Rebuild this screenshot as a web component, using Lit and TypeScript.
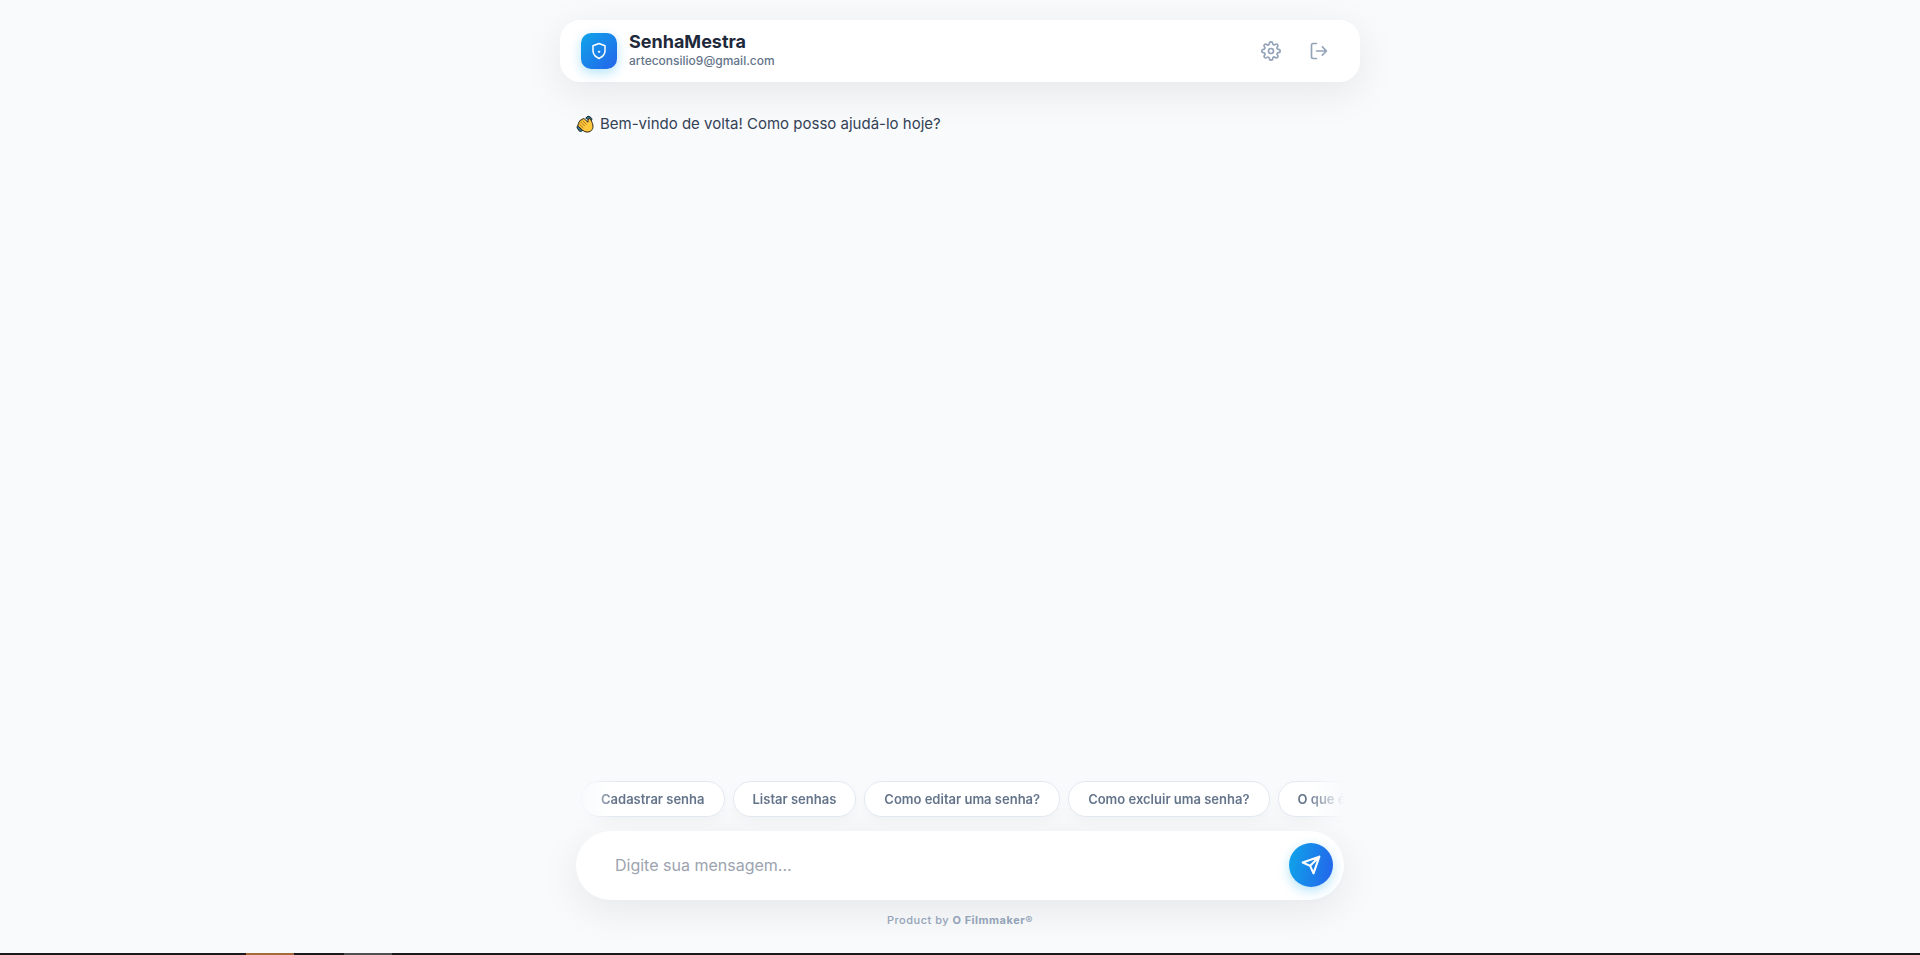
import { LitElement, html, css, svg } from "lit";
import { customElement, state } from "lit/decorators.js";

const gearIcon = svg`
  <circle cx="12" cy="12" r="3"></circle>
  <path d="M19.4 15a1.65 1.65 0 0 0 .33 1.82l.06.06a2 2 0 0 1 0 2.83 2 2 0 0 1-2.83 0l-.06-.06a1.65 1.65 0 0 0-1.82-.33 1.65 1.65 0 0 0-1 1.51V21a2 2 0 0 1-2 2 2 2 0 0 1-2-2v-.09A1.65 1.65 0 0 0 9 19.4a1.65 1.65 0 0 0-1.82.33l-.06.06a2 2 0 0 1-2.83 0 2 2 0 0 1 0-2.83l.06-.06a1.65 1.65 0 0 0 .33-1.82 1.65 1.65 0 0 0-1.51-1H3a2 2 0 0 1-2-2 2 2 0 0 1 2-2h.09A1.65 1.65 0 0 0 4.6 9a1.65 1.65 0 0 0-.33-1.82l-.06-.06a2 2 0 0 1 0-2.83 2 2 0 0 1 2.83 0l.06.06a1.65 1.65 0 0 0 1.82.33H9a1.65 1.65 0 0 0 1-1.51V3a2 2 0 0 1 2-2 2 2 0 0 1 2 2v.09a1.65 1.65 0 0 0 1 1.51 1.65 1.65 0 0 0 1.82-.33l.06-.06a2 2 0 0 1 2.83 0 2 2 0 0 1 0 2.83l-.06.06a1.65 1.65 0 0 0-.33 1.82V9a1.65 1.65 0 0 0 1.51 1H21a2 2 0 0 1 2 2 2 2 0 0 1-2 2h-.09a1.65 1.65 0 0 0-1.51 1z"></path>`;

@customElement("app-root")
export class AppRoot extends LitElement {
  @state() private suggestions = [
    "Cadastrar senha",
    "Listar senhas",
    "Como editar uma senha?",
    "Como excluir uma senha?",
    "O que é o SenhaMestra?",
  ];

  static styles = css`
    :host {
      display: flex;
      flex-direction: column;
      height: 100vh;
      background: #f8fafc;
      color: #1e293b;
      font-family: Inter, "Liberation Sans", sans-serif;
    }
    * { box-sizing: border-box; }
    button { font: inherit; cursor: pointer; }
    svg {
      display: block;
      fill: none;
      stroke: currentColor;
      stroke-width: 2;
      stroke-linecap: round;
      stroke-linejoin: round;
    }
    .page {
      flex: 1;
      min-height: 0;
      width: 100%;
      max-width: 800px;
      margin: 0 auto;
      display: flex;
      flex-direction: column;
    }
    .header {
      display: flex;
      align-items: center;
      gap: 12px;
      margin-top: 20px;
      padding: 12px 20px;
      border: 1px solid #fff;
      border-radius: 20px;
      background: #fff;
      box-shadow: 0 10px 40px rgba(0, 0, 0, 0.08);
    }
    .logo {
      display: grid;
      place-items: center;
      width: 36px;
      height: 36px;
      border-radius: 10px;
      color: #fff;
      background: linear-gradient(135deg, #0ea5e9, #2563eb);
      box-shadow: 0 4px 12px rgba(14, 165, 233, 0.3);
    }
    .identity { flex: 1; }
    .title {
      margin: 0;
      font-size: 18px;
      line-height: 18px;
      font-weight: 700;
    }
    .email {
      margin: 0;
      padding-top: 2px;
      font-size: 12px;
      line-height: 16px;
      font-weight: 500;
      color: #64748b;
    }
    .actions { display: flex; gap: 8px; }
    .icon-button {
      display: grid;
      place-items: center;
      width: 40px;
      height: 36px;
      padding: 0;
      border: 0;
      border-radius: 10px;
      background: transparent;
      color: #94a3b8;
    }
    .messages {
      flex: 1;
      min-height: 0;
      padding: 28px 16px;
    }
    .message {
      display: flex;
      align-items: center;
      gap: 6px;
      margin: 0;
      font-size: 15px;
      line-height: 28px;
      color: #334155;
    }
    .composer { padding: 0 16px 25px; }
    .suggestions {
      display: flex;
      gap: 8px;
      overflow: hidden;
      padding: 4px 5px 14px;
      mask-image: linear-gradient(to right, transparent, #000 5%, #000 95%, transparent);
    }
    .chip {
      flex: none;
      height: 36px;
      padding: 0 19px;
      border: 1px solid #e2e8f0;
      border-radius: 18px;
      background: #fff;
      box-shadow: 0 4px 12px rgba(0, 0, 0, 0.03);
      color: #64748b;
      font-size: 13px;
      font-weight: 600;
      white-space: nowrap;
    }
    .input-bar {
      display: flex;
      align-items: center;
      padding: 11px 11px 13px 39px;
      border-radius: 35px;
      background: #fff;
      box-shadow: 0 10px 40px rgba(0, 0, 0, 0.08);
    }
    .field {
      flex: 1;
      min-width: 0;
      height: 45px;
      padding: 0;
      border: 0;
      outline: 0;
      background: transparent;
      color: #1e293b;
      font: inherit;
      font-size: 16px;
    }
    .field::placeholder { color: #9ca3af; }
    .send {
      display: grid;
      place-items: center;
      width: 44px;
      height: 44px;
      padding: 0;
      border: 0;
      border-radius: 50%;
      color: #fff;
      background: linear-gradient(100deg, #0ea5e9, #2563eb);
      box-shadow: 0 4px 12px rgba(14, 165, 233, 0.3);
    }
    .send svg { stroke-width: 2.5; }
    .credit {
      margin: 12px 0 0;
      font-size: 11px;
      line-height: 16px;
      font-weight: 500;
      letter-spacing: 0.5px;
      text-align: center;
      color: #94a3b8;
    }
    .credit strong { font-weight: 700; }
    .taskbar {
      display: flex;
      gap: 50px;
      height: 2px;
      padding-left: 246px;
      background: #1c181c;
    }
    .task { width: 48px; background: #505050; }
    .task.active { background: #a5693c; }
  `;

  private wave() {
    return html`<svg width="18" height="18" viewBox="0 0 18 18" role="img" aria-label="👋">
      <path fill="#35738c" stroke="#102430" stroke-width="1" d="M10 3c1-2 3-2.300 4-1 1.500.5 2.500 2 1.500 3.500zM1.500 11c-.8 1.200-.5 2.500.5 3 .3 1.800 2 2.800 3.500 2.300l1-1z"></path>
      <path stroke="#2b2012" stroke-width="1" fill="#ffc83d" d="M2.200 11.200c-.9-1.100-.3-2.200.8-2.200-.9-1.300-.2-2.500 1-2.500-.3-1.400.9-2.100 1.900-1.500.3-1.500 1.700-1.800 2.600-.9L12 7.200V5.100c.1-1.900 2.200-1.900 2.900-.3.5 1.400 1.100 2.400 1.600 3.800 1.200 3.600.1 6.700-2.600 7.900-2.500 1.100-5.200.6-7.200-1.200z"></path>
      <path stroke="#a8731c" stroke-width="1" d="m3.800 9.600 3.200 3M5 7.300l3.500 3.500M6.900 5.900l3.200 3.300"></path>
    </svg>`;
  }

  render() {
    return html`
      <main class="page">
        <header class="header">
          <div class="logo">
            <svg width="18" height="18" viewBox="0 0 24 24" aria-hidden="true">
              <path d="M12 22s8-4 8-10V5l-8-3-8 3v7c0 6 8 10 8 10z"></path>
              <circle cx="12" cy="13" r="1" fill="currentColor" stroke-width="1"></circle>
            </svg>
          </div>
          <div class="identity">
            <h1 class="title">SenhaMestra</h1>
            <p class="email">arteconsilio9@gmail.com</p>
          </div>
          <nav class="actions" aria-label="Conta">
            <button class="icon-button" type="button" aria-label="Configurações">
              <svg width="20" height="20" viewBox="0 0 24 24" aria-hidden="true">${gearIcon}</svg>
            </button>
            <button class="icon-button" type="button" aria-label="Sair">
              <svg width="20" height="20" viewBox="0 0 24 24" aria-hidden="true">
                <path d="M9 21H5a2 2 0 0 1-2-2V5a2 2 0 0 1 2-2h4M16 17l5-5-5-5M21 12H9"></path>
              </svg>
            </button>
          </nav>
        </header>
        <section class="messages" aria-label="Conversa">
          <p class="message">${this.wave()}<span>Bem-vindo de volta! Como posso ajudá-lo hoje?</span></p>
        </section>
        <footer class="composer">
          <div class="suggestions">
            ${this.suggestions.map((text) => html`<button class="chip" type="button">${text}</button>`)}
          </div>
          <form class="input-bar" @submit=${(e: Event) => e.preventDefault()}>
            <input class="field" type="text" aria-label="Mensagem" placeholder="Digite sua mensagem..." />
            <button class="send" type="submit" aria-label="Enviar">
              <svg width="20" height="20" viewBox="0 0 24 24" aria-hidden="true">
                <path d="M22 2 11 13M22 2l-7 20-4-9-9-4z"></path>
              </svg>
            </button>
          </form>
          <p class="credit">Product by <strong>O Filmmaker®</strong></p>
        </footer>
      </main>
      <div class="taskbar"><span class="task active"></span><span class="task"></span></div>
    `;
  }
}
